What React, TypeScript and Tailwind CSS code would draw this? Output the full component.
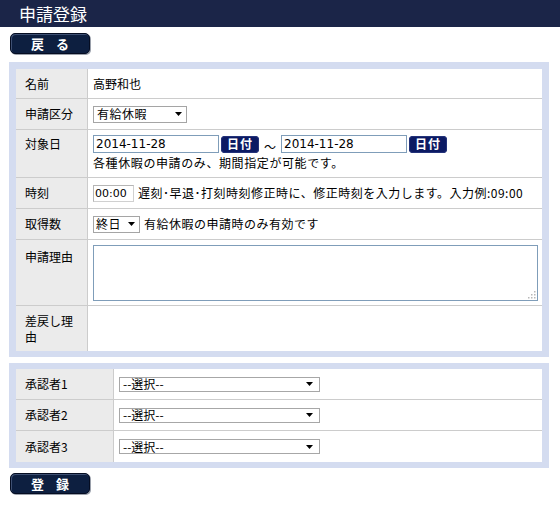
import React from "react";

const jp = { fontFamily: '"Noto Sans CJK JP", "DejaVu Sans", sans-serif' };
const latin = { fontFamily: '"DejaVu Sans", "Noto Sans CJK JP", sans-serif' };

function Arrow() {
  return (
    <svg width="7" height="4" viewBox="0 0 7 4" className="shrink-0">
      <polygon points="0,0 7,0 3.5,4" fill="#000" />
    </svg>
  );
}

function NavBtn({ children }: { children: React.ReactNode }) {
  return (
    <div className="w-[80px] h-[21px] rounded-[5px] bg-[#0d1f40] border border-[#050d22] shadow-[inset_1px_1px_0_#3e5073,1px_1px_0_#9aa0ab] flex items-center justify-center text-white text-[13px] font-bold leading-none tracking-[12px] pl-[12px]">
      {children}
    </div>
  );
}

function DateBtn() {
  return (
    <div className="w-[38px] h-[17px] rounded-[4px] bg-[#0c1a63] shadow-[inset_0_0_0_1px_#23327a] flex items-center justify-center text-white text-[12px] font-bold leading-none tracking-[1px]">
      日付
    </div>
  );
}

function DateInput() {
  return (
    <div
      className="w-[126px] h-[18px] border border-[#7f9db9] bg-white flex items-center pl-[2px] text-[12px] leading-none text-black"
      style={latin}
    >
      2014-11-28
    </div>
  );
}

function Row({
  label,
  children,
  labelClass,
  rowClass,
  valueClass,
  labelW,
  last,
}: {
  label: React.ReactNode;
  children?: React.ReactNode;
  labelClass: string;
  rowClass: string;
  valueClass: string;
  labelW: string;
  last?: boolean;
}) {
  return (
    <div className={`flex ${rowClass} ${last ? "" : "border-b border-[#cccccc]"}`}>
      <div className={`${labelW} shrink-0 bg-[#ebebeb] border-r border-[#cccccc] pl-[9px] pr-[9px] ${labelClass}`}>
        {label}
      </div>
      <div className={`flex-1 bg-white pl-[5px] ${valueClass}`}>{children}</div>
    </div>
  );
}

function Grip() {
  return (
    <svg width="8" height="8" viewBox="0 0 8 8" className="self-end mb-[1px] mr-[1px]">
      <rect x="6" y="0" width="1.5" height="1.5" fill="#b8b8b8" />
      <rect x="3" y="3" width="1.5" height="1.5" fill="#b8b8b8" />
      <rect x="6" y="3" width="1.5" height="1.5" fill="#b8b8b8" />
      <rect x="0" y="6" width="1.5" height="1.5" fill="#b8b8b8" />
      <rect x="3" y="6" width="1.5" height="1.5" fill="#b8b8b8" />
      <rect x="6" y="6" width="1.5" height="1.5" fill="#b8b8b8" />
    </svg>
  );
}

function ApproverSelect() {
  return (
    <div className="w-[201px] h-[15px] border border-[#a7a7a7] bg-white flex items-center justify-between pl-[3px] pr-[6px] text-[12px] leading-none">
      <span>--選択--</span>
      <Arrow />
    </div>
  );
}

export default function App() {
  return (
    <div className="w-[560px] h-[511px] bg-white text-black text-[12px] leading-[16px]" style={jp}>
      <div className="h-[27px] bg-[#1b2548] flex items-center pl-[19px] text-white text-[17px] leading-none">
        申請登録
      </div>

      <div className="pl-[10px] pt-[6px]">
        <NavBtn>戻る</NavBtn>
      </div>

      {/* Panel 1 */}
      <div className="ml-[9px] mt-[8px] w-[540px] bg-[#d4dcf0] pt-[7px] pb-[6px] px-[7px]">
        <div className="w-[526px] flex flex-col">
          <Row label="名前" labelW="w-[72px]" rowClass="h-[30px] items-center" labelClass="h-full flex items-center" valueClass="h-full flex items-center">
            高野和也
          </Row>
          <Row label="申請区分" labelW="w-[72px]" rowClass="h-[31px] items-center" labelClass="h-full flex items-center" valueClass="h-full flex items-center">
            <div className="w-[94px] h-[17px] border border-[#a5a5a5] bg-white flex items-center justify-between pl-[3px] pr-[4px] text-[12px] leading-none tracking-[0.5px]">
              <span>有給休暇</span>
              <Arrow />
            </div>
          </Row>
          <Row label="対象日" labelW="w-[72px]" rowClass="h-[48px]" labelClass="pt-[6px]" valueClass="pt-[5px] flex flex-col">
            <div className="flex items-center gap-[2px]">
              <DateInput />
              <DateBtn />
              <span className="w-[18px] self-end text-center text-[12px] leading-[12px]">～</span>
              <DateInput />
              <DateBtn />
            </div>
            <div className="mt-[2px] leading-[16px] tracking-[0.6px]">各種休暇の申請のみ、期間指定が可能です。</div>
          </Row>
          <Row label="時刻" labelW="w-[72px]" rowClass="h-[31px] items-center" labelClass="h-full flex items-center" valueClass="h-full flex items-center">
            <div
              className="w-[41px] h-[17px] border border-[#d0d0d0] border-l-[#b5b5b5] border-t-[#b5b5b5] bg-white flex items-center pl-[1px] text-[11px] leading-none mr-[4px]"
              style={latin}
            >
              00:00
            </div>
            <span className="tracking-[0.5px]">遅刻･早退･打刻時刻修正時に、修正時刻を入力します。入力例:09:00</span>
          </Row>
          <Row label="取得数" labelW="w-[72px]" rowClass="h-[31px] items-center" labelClass="h-full flex items-center" valueClass="h-full flex items-center">
            <div className="w-[47px] h-[17px] border border-[#a5a5a5] bg-white flex items-center justify-between pl-[2px] pr-[4px] text-[12px] leading-none mr-[4px] tracking-[0.5px]">
              <span>終日</span>
              <Arrow />
            </div>
            <span className="tracking-[0.5px]">有給休暇の申請時のみ有効です</span>
          </Row>
          <Row label="申請理由" labelW="w-[72px]" rowClass="h-[66px]" labelClass="pt-[9px]" valueClass="pt-[5px]">
            <div className="w-[445px] h-[56px] border border-[#7f9db9] bg-white flex justify-end">
              <Grip />
            </div>
          </Row>
          <Row label={<>差戻し理<br />由</>} labelW="w-[72px]" rowClass="h-[45px]" labelClass="pt-[7px]" valueClass="" last>
            {null}
          </Row>
        </div>
      </div>

      {/* Panel 2 */}
      <div className="ml-[9px] mt-[6px] w-[540px] bg-[#d4dcf0] pt-[6px] pb-[6px] px-[7px]">
        <div className="w-[526px] flex flex-col">
          {["承認者1", "承認者2", "承認者3"].map((l, i) => (
            <Row
              key={l}
              label={l}
              labelW="w-[98px]"
              rowClass="h-[31px] items-center"
              labelClass="h-full flex items-center"
              valueClass="h-full flex items-center pl-[4px]"
              last={i === 2}
            >
              <ApproverSelect />
            </Row>
          ))}
        </div>
      </div>

      <div className="pl-[10px] pt-[5px]">
        <NavBtn>登録</NavBtn>
      </div>
    </div>
  );
}
